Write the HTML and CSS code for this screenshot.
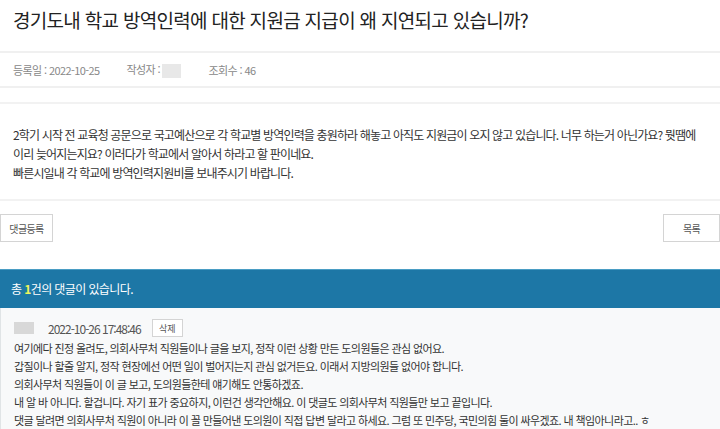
FILE: index.html
```html
<!DOCTYPE html>
<html lang="ko">
<head>
    <meta charset="UTF-8">
    <meta name="viewport" content="width=device-width, initial-scale=1.0">
    <title>게시글 보기</title>
    <link rel="stylesheet" href="styles.css">
</head>
<body>
    <div class="view">
        <h1 class="title">경기도내 학교 방역인력에 대한 지원금 지급이 왜 지연되고 있습니까?</h1>
        <div class="meta">
            <span class="meta-item">등록일 : 2022-10-25</span>
            <span class="meta-item">작성자 : <span class="masked"></span></span>
            <span class="meta-item">조회수 : 46</span>
        </div>
        <div class="body">
            <p>
                2학기 시작 전 교육청 공문으로 국고예산으로 각 학교별 방역인력을 충원하라 해놓고 아직도 지원금이 오지 않고 있습니다. 너무 하는거 아닌가요? 뭣땜에 이리 늦어지는지요? 이러다가 학교에서 알아서 하라고 할 판이네요.<br>
                빠른시일내 각 학교에 방역인력지원비를 보내주시기 바랍니다.
            </p>
        </div>
        <div class="actions">
            <button class="btn">댓글등록</button>
            <button class="btn">목록</button>
        </div>
        <div class="comments">
            <div class="comments-head">총 <em>1</em>건의 댓글이 있습니다.</div>
            <div class="comment">
                <div class="comment-info">
                    <span class="masked avatar"></span>
                    <span class="comment-date">2022-10-26 17:48:46</span>
                    <button class="btn-small">삭제</button>
                </div>
                <p class="comment-text">
                    여기에다 진정 올려도, 의회사무처 직원들이나 글을 보지, 정작 이런 상황 만든 도의원들은 관심 없어요.<br>
                    갑질이나 할줄 알지, 정작 현장에선 어떤 일이 벌어지는지 관심 없거든요. 이래서 지방의원들 없어야 합니다.<br>
                    의회사무처 직원들이 이 글 보고, 도의원들한테 얘기해도 안통하겠죠.<br>
                    내 알 바 아니다. 할겁니다. 자기 표가 중요하지, 이런건 생각안해요. 이 댓글도 의회사무처 직원들만 보고 끝입니다.<br>
                    댓글 달려면 의회사무처 직원이 아니라 이 꼴 만들어낸 도의원이 직접 답변 달라고 하세요. 그럼 또 민주당, 국민의힘 둘이 싸우겠죠. 내 책임아니라고.. ㅎ
                </p>
            </div>
        </div>
    </div>
</body>
</html>
```

FILE: styles.css
```css
body {
    margin: 0;
    padding: 0;
    background: #fff;
    font-family: "Noto Sans CJK KR", "Noto Sans", sans-serif;
    color: #333;
    overflow: hidden;
}

.view {
    width: 720px;
}

.title {
    margin: 0;
    padding: 6px 13px 0;
    height: 45px;
    font-size: 19px;
    font-weight: 400;
    letter-spacing: -0.7px;
    color: #222;
    line-height: 28px;
}

.meta {
    display: flex;
    align-items: center;
    gap: 27px;
    height: 33px;
    padding: 0 13px;
    border-top: 2px solid #f0f0f0;
    border-bottom: 2px solid #f0f0f0;
    font-size: 11px;
    color: #888;
    letter-spacing: -0.6px;
}

.masked {
    display: inline-block;
    width: 19px;
    height: 14px;
    background: #e8e8e8;
    vertical-align: middle;
}

.body {
    margin-top: 14px;
    border-top: 2px solid #f2f2f2;
    border-bottom: 2px solid #f2f2f2;
    padding: 21px 13px 17px;
    height: 57px;
}

.body p {
    margin: 0;
    font-size: 12px;
    line-height: 19px;
    letter-spacing: -0.85px;
    color: #333;
}

.actions {
    display: flex;
    justify-content: space-between;
    margin-top: 13px;
}

.btn {
    height: 28px;
    padding: 0;
    border: 1px solid #d4d4d4;
    background: #fff;
    font-family: inherit;
    font-size: 10px;
    color: #555;
    letter-spacing: -0.6px;
    white-space: nowrap;
}

.btn:first-child {
    width: 53px;
}

.btn:last-child {
    width: 57px;
}

.comments {
    margin-top: 27px;
}

.comments-head {
    height: 38px;
    line-height: 38px;
    padding: 0 11px;
    background: #1d77a6;
    border-top: 1px solid #4a9dc4;
    font-size: 12px;
    color: #fff;
    letter-spacing: -0.6px;
}

.comments-head em {
    font-style: normal;
    font-weight: 700;
    color: #eef55c;
}

.comment {
    background: #f8f9fa;
    border-left: 1px solid #e0e4e6;
    border-bottom: 2px solid #6e9fb4;
    padding: 10px 13px 3px;
}

.comment-info {
    display: flex;
    align-items: center;
    height: 20px;
    margin-bottom: 1px;
    font-size: 12px;
    color: #555;
}

.avatar {
    width: 20px;
    height: 12px;
    background: #d8d8d8;
    margin-right: 14px;
}

.comment-date {
    margin-right: 11px;
    letter-spacing: -1px;
}

.btn-small {
    height: 18px;
    width: 31px;
    padding: 0;
    border: 1px solid #d4d4d4;
    background: #fff;
    font-family: inherit;
    font-size: 9px;
    color: #555;
}

.comment-text {
    margin: 0;
    font-size: 11px;
    line-height: 18px;
    letter-spacing: -0.6px;
    color: #333;
}
```
